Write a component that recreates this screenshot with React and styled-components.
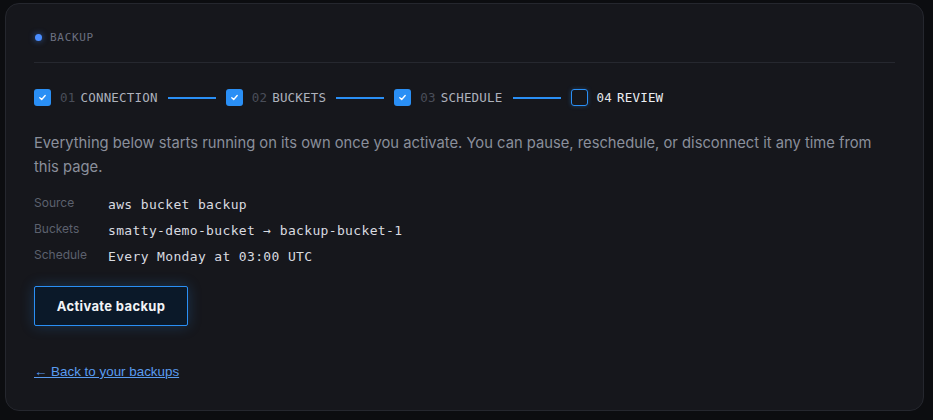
import React from 'react';
import styled, {createGlobalStyle} from 'styled-components';

const Global = createGlobalStyle`
  html, body { margin:0; padding:0; background:#0c0d10; }
  body { font-family: Inter, "Noto Sans", sans-serif; }
`;

const Page = styled.div`
  padding:3px 9px 0 5px;
`;

const Card = styled.div`
  box-sizing:border-box;
  height:408px;
  background:#16171c;
  border:1px solid #25272e;
  border-radius:14px;
  padding:24px 28px 0 28px;
`;

const Header = styled.div`
  display:flex;
  align-items:center;
  gap:8px;
  height:18px;
  padding-left:1px;
`;

const Dot = styled.span`
  width:7px;
  height:7px;
  border-radius:50%;
  background:#4a8dff;
  box-shadow:0 0 6px rgba(74,141,255,0.6);
`;

const Eyebrow = styled.span`
  font-family:"DejaVu Sans Mono", monospace;
  font-size:11px;
  letter-spacing:0.7px;
  color:#6b7080;
`;

const Divider = styled.div`
  height:1px;
  background:#26282f;
  margin:16px 0 26px;
`;

const Steps = styled.div`
  display:flex;
  align-items:center;
  gap:10px;
  height:17px;
`;

const Step = styled.div`
  display:flex;
  align-items:center;
  gap:9px;
  font-family:"DejaVu Sans Mono", monospace;
  font-size:12.5px;
  letter-spacing:0.2px;
`;

const Box = styled.span`
  box-sizing:border-box;
  width:17px;
  height:17px;
  border-radius:3px;
  display:flex;
  align-items:center;
  justify-content:center;
  background:${({done}) => done ? '#2a8ff5' : 'transparent'};
  border:${({done}) => done ? 'none' : '1.5px solid #2a8ff5'};
  box-shadow:${({done}) => done ? 'none' : '0 0 4px rgba(42,143,245,0.35)'};
`;

const Num = styled.span`
  color:${({active}) => active ? '#e4e6ea' : '#4a4e59'};
  margin-right:-4px;
`;

const Label = styled.span`
  color:${({active}) => active ? '#eceef2' : '#aeb2bc'};
`;

const Line = styled.span`
  width:48px;
  height:2px;
  background:#2a8ff5;
`;

const Lead = styled.p`
  margin:25px 0 13px;
  font-size:14.75px;
  line-height:24px;
  color:#8a8f9b;
`;

const Details = styled.div`
  display:grid;
  grid-template-columns:74px 1fr;
  grid-auto-rows:26px;
`;

const Key = styled.span`
  font-size:12px;
  color:#5c616e;
  line-height:22px;
`;

const Value = styled.span`
  font-family:"DejaVu Sans Mono", monospace;
  font-size:13px;
  letter-spacing:0.35px;
  color:#d9dbe0;
  line-height:26px;
`;

const Button = styled.button`
  margin-top:16px;
  width:154px;
  height:40px;
  background:#0b1929;
  border:1px solid #2a8ff5;
  border-radius:2px;
  color:#f2f4f7;
  font-family:Inter, sans-serif;
  font-weight:700;
  font-size:13px;
  letter-spacing:0.35px;
  box-shadow:0 0 14px rgba(42,143,245,0.25);
  cursor:pointer;
`;

const Back = styled.a`
  display:inline-block;
  margin-top:37px;
  font-family:"Liberation Sans", Arial, sans-serif;
  font-size:13.4px;
  line-height:18px;
  color:#5a9cf0;
  text-decoration:underline;
`;

const Check = () => (
  <svg width="9" height="9" viewBox="0 0 10 10">
    <path d="M2 5.3 L4.1 7.2 L8 2.8" fill="none" stroke="#fff" strokeWidth="1.5" strokeLinecap="round" strokeLinejoin="round"/>
  </svg>
);

const steps = [
  {n:'01', label:'CONNECTION', done:true},
  {n:'02', label:'BUCKETS', done:true},
  {n:'03', label:'SCHEDULE', done:true},
  {n:'04', label:'REVIEW', done:false},
];

const rows = [
  ['Source', 'aws bucket backup'],
  ['Buckets', 'smatty-demo-bucket → backup-bucket-1'],
  ['Schedule', 'Every Monday at 03:00 UTC'],
];

export default function App(){
  return (
    <Page>
      <Global/>
      <Card>
        <Header>
          <Dot/>
          <Eyebrow>BACKUP</Eyebrow>
        </Header>
        <Divider/>
        <Steps>
          {steps.map((s, i) => (
            <React.Fragment key={s.n}>
              <Step>
                <Box done={s.done}>{s.done && <Check/>}</Box>
                <Num active={!s.done}>{s.n}</Num>
                <Label active={!s.done}>{s.label}</Label>
              </Step>
              {i < steps.length - 1 && <Line/>}
            </React.Fragment>
          ))}
        </Steps>
        <Lead>
          Everything below starts running on its own once you activate. You can pause, reschedule, or disconnect it any time from this page.
        </Lead>
        <Details>
          {rows.map(([k, v]) => (
            <React.Fragment key={k}>
              <Key>{k}</Key>
              <Value>{v}</Value>
            </React.Fragment>
          ))}
        </Details>
        <Button>Activate backup</Button>
        <div>
          <Back href="#">← Back to your backups</Back>
        </div>
      </Card>
    </Page>
  );
}
